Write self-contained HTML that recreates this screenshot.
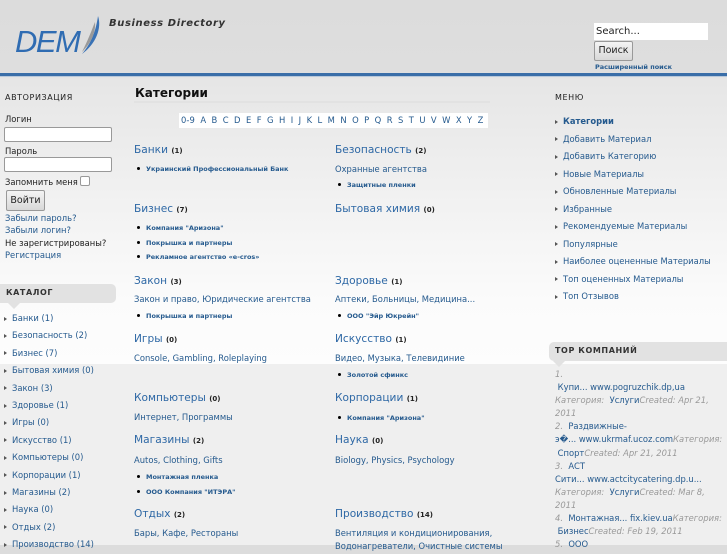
<!DOCTYPE html>
<html><head><meta charset="utf-8"><style>
*{margin:0;padding:0;box-sizing:border-box}
body{width:727px;height:545px;overflow:hidden;position:relative;font-family:"DejaVu Sans","Liberation Sans",sans-serif;font-size:8.4px;color:#222;background:linear-gradient(#dcdcdc 0,#dedede 72px,#e6e6e6 80px,#fbfbfb 300px,#fdfdfd 364px,#efefef 364px,#efefef 545px)}
.a{position:absolute;white-space:nowrap}
a,.l{color:#255a8e;text-decoration:none}
.h{font-size:8px;letter-spacing:.6px;color:#222}
.t{font-size:10.6px;color:#2e68a5}
.t small{font-size:7px;color:#222;font-weight:bold}
.b{font-size:6.5px;color:#255a8e;font-weight:bold}
.b:before{content:"";display:inline-block;width:3px;height:3px;border-radius:50%;background:#000;margin:0 6px 1px 2px;vertical-align:middle}
.m:before{content:"";display:inline-block;border-left:3px solid #555;border-top:2px solid transparent;border-bottom:2px solid transparent;margin-right:5px;vertical-align:middle}
input.tx{position:absolute;border:1px solid #999;border-radius:2px;background:#fff}
.btn{position:absolute;border:1px solid #999;border-radius:2px;background:linear-gradient(#f4f4f4,#d8d8d8);font-size:9.5px;text-align:center}
.g{color:#999;font-style:italic}
</style></head><body>
<div class="a" style="left:15px;top:24px;font:italic 31px 'Liberation Sans',sans-serif;color:#2f6cb2;letter-spacing:-1.5px">DEM</div>
<svg class="a" style="left:78px;top:14px" width="24" height="42"><path d="M20 2 C24 14 18 30 4 40 C14 28 18 16 20 2Z" fill="#3a72b5"/><path d="M17 8 C18 20 12 30 4 38 C10 26 13 18 17 8Z" fill="#999"/></svg>
<div class="a" style="left:109px;top:18px;font:italic bold 10px 'DejaVu Sans',sans-serif;color:#333;letter-spacing:.6px">Business Directory</div>
<div class="a" style="left:594px;top:23px;width:114px;height:17px;background:#fff;font-size:10px;padding:3px 2px">Search...</div>
<div class="btn" style="left:594px;top:41px;width:39px;height:20px;padding-top:3px">Поиск</div>
<div class="a l" style="left:595px;top:63px;font-size:6.5px;font-weight:bold">Расширенный поиск</div>
<div class="a" style="left:0;top:73px;width:727px;height:3px;background:#3a6ea8"></div>
<div class="a" style="left:0;top:76px;width:727px;height:1px;background:#b8c8da"></div>

<div class="a h" style="left:5px;top:93px">АВТОРИЗАЦИЯ</div>
<div class="a" style="left:5px;top:114px">Логин</div>
<input class="tx" style="left:4px;top:127px;width:108px;height:15px">
<div class="a" style="left:5px;top:146px">Пароль</div>
<input class="tx" style="left:4px;top:157px;width:108px;height:15px">
<div class="a" style="left:5px;top:177px">Запомнить меня</div>
<div class="a" style="left:80px;top:176px;width:10px;height:10px;border:1px solid #999;border-radius:2px;background:#fff"></div>
<div class="btn" style="left:6px;top:190px;width:39px;height:21px;padding-top:4px">Войти</div>
<div class="a l" style="left:5px;top:213px">Забыли пароль?</div>
<div class="a l" style="left:5px;top:225px">Забыли логин?</div>
<div class="a" style="left:5px;top:238px">Не зарегистрированы?</div>
<div class="a l" style="left:5px;top:250px">Регистрация</div>
<div class="a" style="left:0;top:284px;width:116px;height:19px;background:#e2e2e2;border-radius:0 5px 5px 0"></div>
<div class="a" style="left:8px;top:303px;border-left:6px solid transparent;border-right:6px solid transparent;border-top:6px solid #e2e2e2;width:0"></div>
<div class="a h" style="left:6px;top:288px;font-weight:bold;color:#333">КАТАЛОГ</div>
<div class="a" style="left:4px;top:310px;line-height:17.4px">
<div class="m l">Банки (1)</div><div class="m l">Безопасность (2)</div><div class="m l">Бизнес (7)</div><div class="m l">Бытовая химия (0)</div><div class="m l">Закон (3)</div><div class="m l">Здоровье (1)</div><div class="m l">Игры (0)</div><div class="m l">Искусство (1)</div><div class="m l">Компьютеры (0)</div><div class="m l">Корпорации (1)</div><div class="m l">Магазины (2)</div><div class="m l">Наука (0)</div><div class="m l">Отдых (2)</div><div class="m l">Производство (14)</div></div>

<div class="a" style="left:135px;top:86px;font-size:12px;font-weight:bold;color:#111">Категории</div>
<div class="a" style="left:134px;top:101px;width:356px;height:2px;background:#e2e2e2"></div>
<div class="a l" style="left:179px;top:113px;width:309px;height:15px;background:#fff;font-size:8.4px;padding:2px 2px;word-spacing:2.6px;letter-spacing:.1px">0-9 A B C D E F G H I J K L M N O P Q R S T U V W X Y Z</div>

<div class="a t" style="left:134px;top:144px">Банки <small>(1)</small></div>
<div class="a b" style="left:135px;top:165px">Украинский Профессиональный Банк</div>
<div class="a t" style="left:134px;top:203px">Бизнес <small>(7)</small></div>
<div class="a b" style="left:135px;top:224px">Компания "Аризона"</div>
<div class="a b" style="left:135px;top:239px">Покрышка и партнеры</div>
<div class="a b" style="left:135px;top:253px">Рекламное агентство «e-cros»</div>
<div class="a t" style="left:134px;top:275px">Закон <small>(3)</small></div>
<div class="a l" style="left:134px;top:294px">Закон и право, Юридические агентства</div>
<div class="a b" style="left:135px;top:312px">Покрышка и партнеры</div>
<div class="a t" style="left:134px;top:333px">Игры <small>(0)</small></div>
<div class="a l" style="left:134px;top:353px">Console, Gambling, Roleplaying</div>
<div class="a t" style="left:134px;top:392px">Компьютеры <small>(0)</small></div>
<div class="a l" style="left:134px;top:412px">Интернет, Программы</div>
<div class="a t" style="left:134px;top:434px">Магазины <small>(2)</small></div>
<div class="a l" style="left:134px;top:455px">Autos, Clothing, Gifts</div>
<div class="a b" style="left:135px;top:473px">Монтажная пленка</div>
<div class="a b" style="left:135px;top:488px">ООО Компания "ИТЭРА"</div>
<div class="a t" style="left:134px;top:508px">Отдых <small>(2)</small></div>
<div class="a l" style="left:134px;top:528px">Бары, Кафе, Рестораны</div>

<div class="a t" style="left:335px;top:144px">Безопасность <small>(2)</small></div>
<div class="a l" style="left:335px;top:164px">Охранные агентства</div>
<div class="a b" style="left:336px;top:181px">Защитные пленки</div>
<div class="a t" style="left:335px;top:203px">Бытовая химия <small>(0)</small></div>
<div class="a t" style="left:335px;top:275px">Здоровье <small>(1)</small></div>
<div class="a l" style="left:335px;top:294px">Аптеки, Больницы, Медицина...</div>
<div class="a b" style="left:336px;top:312px">ООО "Эйр Юкрейн"</div>
<div class="a t" style="left:335px;top:333px">Искусство <small>(1)</small></div>
<div class="a l" style="left:335px;top:353px">Видео, Музыка, Телевидиние</div>
<div class="a b" style="left:336px;top:371px">Золотой сфинкс</div>
<div class="a t" style="left:335px;top:392px">Корпорации <small>(1)</small></div>
<div class="a b" style="left:336px;top:414px">Компания "Аризона"</div>
<div class="a t" style="left:335px;top:434px">Наука <small>(0)</small></div>
<div class="a l" style="left:335px;top:455px">Biology, Physics, Psychology</div>
<div class="a t" style="left:335px;top:508px">Производство <small>(14)</small></div>
<div class="a l" style="left:335px;top:528px">Вентиляция и кондиционирования,</div>
<div class="a l" style="left:335px;top:541px">Водонагреватели, Очистные системы</div>

<div class="a h" style="left:555px;top:93px">МЕНЮ</div>
<div class="a" style="left:555px;top:113px;line-height:17.5px">
<div class="m l" style="font-weight:bold">Категории</div><div class="m l">Добавить Материал</div><div class="m l">Добавить Категорию</div><div class="m l">Новые Материалы</div><div class="m l">Обновленные Материалы</div><div class="m l">Избранные</div><div class="m l">Рекомендуемые Материалы</div><div class="m l">Популярные</div><div class="m l">Наиболее оцененные Материалы</div><div class="m l">Топ оцененных Материалы</div><div class="m l">Топ Отзывов</div></div>

<div class="a" style="left:549px;top:342px;width:178px;height:19px;background:#e2e2e2;border-radius:5px 0 0 5px"></div>
<div class="a" style="left:553px;top:361px;border-left:6px solid transparent;border-right:6px solid transparent;border-top:6px solid #e2e2e2;width:0"></div>
<div class="a h" style="left:555px;top:346px;font-weight:bold;color:#333">ТОР КОМПАНИЙ</div>
<div class="a" style="left:555px;top:368px;line-height:13.1px;white-space:normal;width:172px">
<div class="g">1.</div>
<div>&nbsp;<span class="l">Купи... www.pogruzchik.dp,ua</span></div>
<div><span class="g">Категория: </span>&nbsp;<span class="l">Услуги</span><span class="g">Created: Apr 21, 2011</span></div>
<div><span class="g">2. </span>&nbsp;<span class="l">Раздвижные-</span></div>
<div style="white-space:nowrap"><span class="l">э�... www.ukrmaf.ucoz.com</span><span class="g">Категория:</span></div>
<div>&nbsp;<span class="l">Спорт</span><span class="g">Created: Apr 21, 2011</span></div>
<div><span class="g">3. </span>&nbsp;<span class="l">АСТ</span></div>
<div style="white-space:nowrap"><span class="l">Сити... www.actcitycatering.dp.u...</span></div>
<div><span class="g">Категория: </span>&nbsp;<span class="l">Услуги</span><span class="g">Created: Mar 8, 2011</span></div>
<div style="white-space:nowrap"><span class="g">4. </span>&nbsp;<span class="l">Монтажная... fix.kiev.ua</span><span class="g">Категория:</span></div>
<div>&nbsp;<span class="l">Бизнес</span><span class="g">Created: Feb 19, 2011</span></div>
<div><span class="g">5. </span>&nbsp;<span class="l">ООО</span></div>
</div>
</body></html>
